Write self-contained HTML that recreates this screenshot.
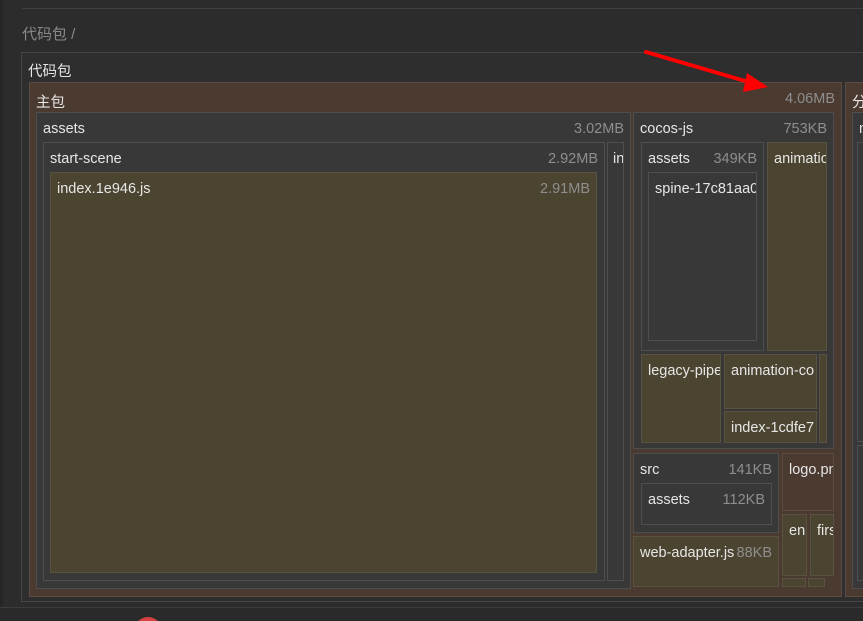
<!DOCTYPE html>
<html><head><meta charset="utf-8"><style>
html,body{margin:0;padding:0;width:863px;height:621px;overflow:hidden;}
body{background:#2c2c2c;position:relative;font-family:"Liberation Sans","Noto Sans CJK SC",sans-serif;font-size:14.5px;color:#e6e6e6;}
.b{position:absolute;box-sizing:border-box;overflow:hidden;}
.d{background:#383838;border:1px solid #4e4e4e;}
.br{background:#4a3a30;border:1px solid #5c4b42;}
.o{background:#4b4430;border:1px solid #5a5240;}
.l{position:absolute;left:6px;top:8px;white-space:nowrap;}
.s{position:absolute;right:6px;top:8px;color:#8e8e8e;white-space:nowrap;}
</style></head><body>
<div class="b" style="left:0;top:0;width:3px;height:608px;background:#262626"></div>
<div class="b" style="left:22px;top:8px;width:841px;height:1px;background:#404040"></div>
<div style="position:absolute;left:22px;top:23px;color:#8a8a8a;font-size:15px">代码包 /</div>
<div class="b" style="left:21px;top:52px;width:850px;height:550px;border:1px solid #464646;background:#2e2e2e"></div>
<div style="position:absolute;left:28px;top:60px;">代码包</div>

<div class="b br" style="left:29px;top:82px;width:813px;height:515px">
 <div class="l" style="top:8px">主包</div><div class="s" style="top:8px">4.06MB</div>
</div>
<div class="b d" style="left:36px;top:112px;width:595px;height:477px"><div class="l">assets</div><div class="s">3.02MB</div></div>
<div class="b d" style="left:43px;top:142px;width:562px;height:439px"><div class="l">start-scene</div><div class="s">2.92MB</div></div>
<div class="b d" style="left:607px;top:142px;width:17px;height:439px"><div class="l" style="left:5px">in</div></div>
<div class="b o" style="left:50px;top:172px;width:547px;height:401px"><div class="l">index.1e946.js</div><div class="s">2.91MB</div></div>

<div class="b d" style="left:633px;top:112px;width:201px;height:337px"><div class="l">cocos-js</div><div class="s">753KB</div></div>
<div class="b d" style="left:641px;top:142px;width:123px;height:209px"><div class="l">assets</div><div class="s">349KB</div></div>
<div class="b d" style="left:648px;top:172px;width:109px;height:169px"><div class="l">spine-17c81aa0</div></div>
<div class="b o" style="left:767px;top:142px;width:60px;height:209px"><div class="l">animation</div></div>
<div class="b o" style="left:641px;top:354px;width:80px;height:89px"><div class="l">legacy-pipeline</div></div>
<div class="b o" style="left:724px;top:354px;width:93px;height:55px"><div class="l">animation-co</div></div>
<div class="b o" style="left:724px;top:411px;width:93px;height:32px"><div class="l">index-1cdfe7</div></div>
<div class="b o" style="left:819px;top:354px;width:8px;height:89px"></div>

<div class="b d" style="left:633px;top:453px;width:146px;height:80px"><div class="l">src</div><div class="s">141KB</div></div>
<div class="b d" style="left:641px;top:483px;width:131px;height:42px"><div class="l">assets</div><div class="s">112KB</div></div>
<div class="b o" style="left:633px;top:536px;width:146px;height:51px"><div class="l">web-adapter.js</div><div class="s" style="right:6px">88KB</div></div>
<div class="b br" style="left:782px;top:453px;width:52px;height:58px"><div class="l">logo.png</div></div>
<div class="b o" style="left:782px;top:514px;width:25px;height:62px"><div class="l">en</div></div>
<div class="b o" style="left:810px;top:514px;width:24px;height:62px"><div class="l">first</div></div>
<div class="b o" style="left:782px;top:578px;width:24px;height:9px"></div>
<div class="b o" style="left:808px;top:578px;width:17px;height:9px"></div>

<div class="b br" style="left:845px;top:82px;width:30px;height:515px"><div class="l" style="top:8px">分包</div></div>
<div class="b d" style="left:852px;top:112px;width:20px;height:477px"><div class="l">m</div></div>
<div class="b d" style="left:857px;top:142px;width:20px;height:300px"></div>
<div class="b d" style="left:857px;top:445px;width:20px;height:136px"></div>

<div class="b" style="left:0;top:607px;width:863px;height:14px;background:#2a2a2a;border-top:1px solid #3c3c3c">
 <div style="position:absolute;left:134px;top:9px;width:28px;height:28px;border-radius:50%;background:#d94040"></div>
</div>

<svg style="position:absolute;left:0;top:0" width="863" height="621">
<line x1="646" y1="52" x2="752" y2="83" stroke="#ff0000" stroke-width="4" stroke-linecap="round"/>
<polygon points="768,87 747,73 743,92" fill="#ff0000"/>
</svg>
</body></html>
